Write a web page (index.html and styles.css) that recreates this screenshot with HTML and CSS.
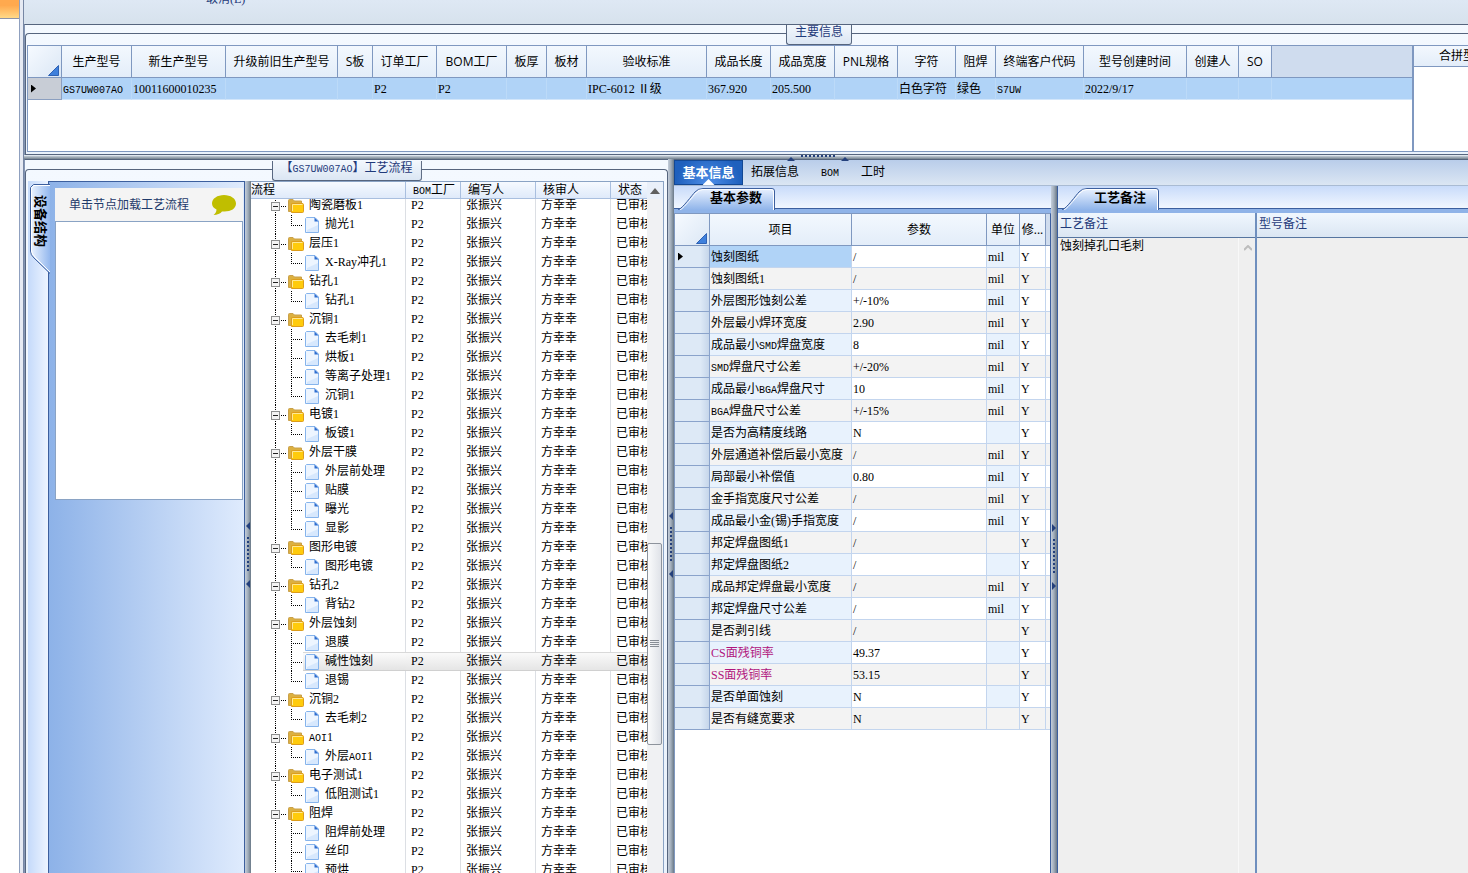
FILE: index.html
```html
<!DOCTYPE html>
<html lang="zh-CN">
<head>
<meta charset="utf-8">
<title>工艺流程</title>
<link rel="stylesheet" href="styles.css">
</head>
<body>
<aside class="rail"><div class="rail-item"></div></aside>
<main class="workspace">
  <header class="toolbar"><button class="cancel" type="button">取消(E)</button></header>

  <section class="main-info">
    <div class="frame">
      <h2 class="caption caption-main">主要信息</h2>
      <div class="grids">
        <div class="order-box">
          <table class="grid order-grid">
            <colgroup id="orderCols"></colgroup>
            <thead><tr id="orderHead"></tr></thead>
            <tbody><tr id="orderRow"></tr></tbody>
          </table>
        </div>
        <div class="merge-box">
          <div class="merge-head">合拼型号</div>
        </div>
      </div>
    </div>
  </section>

  <div class="split-h">
    <svg class="grip-h" width="62" height="6" viewBox="0 0 62 6"><path d="M0 6L4 2L8 6ZM54 6L58 2L62 6Z" fill="#24407c"/><path d="M14 1H50" stroke="#24407c" stroke-width="2" stroke-dasharray="2 2"/></svg>
  </div>

  <div class="lower">
    <section class="process">
      <div class="frame">
        <h2 class="caption caption-process">【<span class="n">GS7UW007AO</span>】工艺流程</h2>
        <div class="process-body">
          <div class="side-tabs">
            <button class="side-tab" type="button">
              <svg width="22" height="92" viewBox="0 0 22 92">
                <defs><linearGradient id="sideFill"><stop offset="0" stop-color="#eef5ff"/><stop offset="1" stop-color="#94b8ee"/></linearGradient></defs>
                <path d="M21 1.500H4.500L1.500 4.500V68Q1.500 72 5 75L21 90.500" fill="url(#sideFill)" stroke="#3c5f9e"/>
                <path d="M21 2.500H5L2.500 5V68Q3 71 6 74L21 89" fill="none" stroke="#fff"/>
              </svg>
              <span>设备结构</span>
            </button>
          </div>
          <div class="structure">
            <div class="hint">
              <span>单击节点加载工艺流程</span>
              <svg width="26" height="22" viewBox="0 0 26 22"><path d="M13 1C19.500 1 25 4.500 25 9.500S20 17.500 13.500 17.500H11C9.500 19.500 6 21 2.500 21C4.500 19.500 5.500 17.500 5.500 15.500C2.500 14 1 12 1 9.500C1 4.500 6.500 1 13 1Z" fill="#c0be00"/></svg>
            </div>
            <div class="structure-view"></div>
          </div>
          <div class="split-v"><svg class="grip-v" width="6" height="66" viewBox="0 0 6 66"><path d="M5 0V8L1 4ZM5 58V66L1 62Z" fill="#24407c"/><path d="M3 15V50" stroke="#24407c" stroke-width="2" stroke-dasharray="2 2"/></svg></div>
          <div class="tree-wrap">
            <div class="tree-scroll" id="treeScroll">
              <table class="tree">
                <colgroup><col class="c-name"><col class="c-plant"><col class="c-user"><col class="c-user"><col class="c-state"></colgroup>
                <thead><tr><th>流程</th><th><span class="n">BOM</span>工厂</th><th>编写人</th><th>核审人</th><th>状态</th></tr></thead>
                <tbody id="treeBody"></tbody>
              </table>
            </div>
            <div class="scrollbar">
              <button class="scroll-up" type="button" aria-label="向上滚动"><svg width="10" height="6" viewBox="0 0 10 6"><path d="M0 6L5 0L10 6Z" fill="#606060"/></svg></button>
              <div class="track"><div class="thumb"><svg width="9" height="8" viewBox="0 0 9 8"><path d="M0 .5H9M0 2.500H9M0 4.500H9M0 6.500H9" stroke="#888e96"/></svg></div></div>
            </div>
          </div>
        </div>
      </div>
    </section>

    <div class="split-v split-main"><svg class="grip-v" width="6" height="66" viewBox="0 0 6 66"><path d="M5 0V8L1 4ZM5 58V66L1 62Z" fill="#24407c"/><path d="M3 15V50" stroke="#24407c" stroke-width="2" stroke-dasharray="2 2"/></svg></div>

    <section class="detail">
      <nav class="tabs">
        <button class="tab active" type="button">基本信息</button>
        <button class="tab" type="button">拓展信息</button>
        <button class="tab" type="button"><span class="n">BOM</span></button>
        <button class="tab" type="button">工时</button>
      </nav>
      <div class="detail-body">
        <div class="params">
          <div class="page-tabs">
            <button class="page-tab" type="button">
              <svg width="100" height="22" viewBox="0 0 100 22">
                <defs><linearGradient id="tabFill" x2="0" y2="1"><stop offset="0" stop-color="#eaf2ff"/><stop offset="1" stop-color="#8fb4ea"/></linearGradient></defs>
                <path d="M3 22C8 20 17 7 20 4Q23 .5 28 .5H97Q99.500 .5 99.500 3V22" fill="url(#tabFill)" stroke="#3c5f9e"/>
                <path d="M5 22C10 19 18 8 21 5Q24 1.500 28 1.500H96Q98.500 1.500 98.500 4V22" fill="none" stroke="#fff"/>
              </svg>
              <span>基本参数</span>
            </button>
          </div>
          <div class="params-box">
            <table class="grid param-grid">
              <colgroup><col class="p-head"><col class="p-item"><col class="p-value"><col class="p-unit"><col class="p-edit"><col></colgroup>
              <thead><tr><th class="corner"></th><th>项目</th><th>参数</th><th>单位</th><th>修...</th><th></th></tr></thead>
              <tbody id="paramBody"></tbody>
            </table>
          </div>
        </div>
        <div class="split-v"><svg class="grip-v" width="6" height="66" viewBox="0 0 6 66"><path d="M1 0V8L5 4ZM1 58V66L5 62Z" fill="#24407c"/><path d="M3 15V50" stroke="#24407c" stroke-width="2" stroke-dasharray="2 2"/></svg></div>
        <div class="remarks">
          <div class="page-tabs">
            <button class="page-tab" type="button">
              <svg width="100" height="22" viewBox="0 0 100 22">
                <path d="M3 22C8 20 17 7 20 4Q23 .5 28 .5H97Q99.500 .5 99.500 3V22" fill="url(#tabFill)" stroke="#3c5f9e"/>
                <path d="M5 22C10 19 18 8 21 5Q24 1.500 28 1.500H96Q98.500 1.500 98.500 4V22" fill="none" stroke="#fff"/>
              </svg>
              <span>工艺备注</span>
            </button>
          </div>
          <div class="remark-cols">
            <div class="remark process-remark">
              <label for="processRemark">工艺备注</label>
              <div class="remark-text">
                <textarea id="processRemark" readonly>蚀刻掉孔口毛刺</textarea>
                <div class="remark-scroll"><svg width="8" height="6" viewBox="0 0 8 6"><path d="M0 5L4 1L8 5" fill="none" stroke="#bdbdbd" stroke-width="2"/></svg></div>
              </div>
            </div>
            <div class="remark model-remark">
              <label for="modelRemark">型号备注</label>
              <div class="remark-text"><textarea id="modelRemark" readonly></textarea></div>
            </div>
          </div>
        </div>
      </div>
    </section>
  </div>
</main>
<script src="app.js"></script>
</body>
</html>
```
FILE: styles.css
```css
* { box-sizing: border-box; }

body {
  margin: 0;
  height: 100vh;
  display: flex;
  overflow: hidden;
  background: #fff;
  color: #000;
  font: 12px/18px "Liberation Serif", "Noto Sans CJK SC", serif;
}

button {
  margin: 0;
  padding: 0;
  border: 0;
  background: none;
  color: inherit;
  font: inherit;
}

svg { display: block; }

/* Narrow capitals */
.n { font-family: "Liberation Mono", monospace; font-size: 10px; line-height: 0; }

/* Left rail */
.rail {
  flex: none;
  width: 24px;
  background: #fff;
  border-right: 1px solid #7787a4;
  box-shadow: inset -3px 0 #e6eaf3, inset -4px 0 #8fa0bf;
}
.rail-item {
  width: 19px;
  height: 19px;
  border-bottom: 1px solid #8b93a8;
  background: linear-gradient(#ffa94e 30%, #ffd987);
}

.workspace {
  flex: 1;
  min-width: 0;
  display: flex;
  flex-direction: column;
}

.toolbar {
  flex: none;
  height: 24px;
  padding-left: 182px;
  overflow: hidden;
  background: linear-gradient(#dee8f4, #d7e2ed);
  color: #1f3a7a;
}
.cancel { display: block; margin-top: -10px; line-height: 18px; }

/* Framed panels */
.main-info, .process {
  background: linear-gradient(#f4f9ff, #eaf2fc);
  border-top: 1px solid #56657e;
  border-left: 1px solid #8496b5;
}
.main-info { flex: none; padding-top: 8px; }
.frame {
  position: relative;
  border: 1px solid #56657e;
  border-radius: 4px 4px 0 0;
  padding: 11px 0 2px 1px;
}
.main-info .frame { border-right: 0; border-top-right-radius: 0; }
.caption {
  position: absolute;
  top: -9px;
  left: 50%;
  transform: translateX(-50%);
  margin: 0;
  height: 20px;
  padding: 0 8px;
  border: 1px solid #56657e;
  border-top: 0;
  border-radius: 0 0 3px 3px;
  background: linear-gradient(#f2f7fd, #dbe6f3);
  color: #1f3a7a;
  font-size: 12px;
  font-weight: normal;
  line-height: 14px;
  white-space: nowrap;
}
.caption-main { left: 55%; }

.grids { display: flex; height: 107px; }
.order-box {
  flex: 1;
  min-width: 0;
  overflow: hidden;
  border: 1px solid #7f98c0;
  border-right: 0;
  background: #fff;
}
.merge-box {
  flex: none;
  width: 56px;
  overflow: hidden;
  border: 1px solid #7f98c0;
  border-left-width: 2px;
  border-right: 0;
  background: #fff;
}
.merge-head {
  height: 21px;
  padding-left: 25px;
  border-bottom: 1px solid #7f98c0;
  background: linear-gradient(#f3f8fe, #e3edf9);
  font-family: "Open Sans", "Noto Sans CJK SC", sans-serif;
  white-space: nowrap;
  line-height: 20px;
}

/* Data grids */
.grid {
  width: 100%;
  table-layout: fixed;
  border-collapse: separate;
  border-spacing: 0;
}
.grid th, .grid td {
  padding: 0 1px;
  overflow: hidden;
  white-space: nowrap;
  text-align: left;
}
.grid th {
  height: 32px;
  border-right: 1px solid #7f98c0;
  border-bottom: 1px solid #7f98c0;
  background: linear-gradient(#f3f8fe, #e3edf9);
  font-family: "Open Sans", "Noto Sans CJK SC", sans-serif;
  font-weight: normal;
  text-align: center;
}
.grid th:last-child { border-right: 0; background: #cfdcee; }
.grid th.corner {
  background: linear-gradient(135deg, #f6faff, #dbe7f5);
}
.corner svg { margin: 17px 1px 0 auto; }
.marker::before {
  content: "";
  display: block;
  width: 5px;
  height: 8px;
  margin-left: 2px;
  background: #000;
  clip-path: polygon(0 0, 100% 50%, 0 100%);
}
.order-grid td {
  height: 22px;
  background: #b0d3f7;
  border-right: 1px solid #bcdaf8;
  border-bottom: 1px solid #d3e6fa;
}
.order-grid td:first-child { background: #c8cdd6; border-color: #8b9fc0; }
.order-grid td:last-child { border-right: 0; }

.param-grid td {
  height: 22px;
  background: #fff;
  border-right: 1px solid #c3d5ee;
  border-bottom: 1px solid #c3d5ee;
}
.param-grid td:nth-child(2), .param-grid td:nth-child(4) { background: #e8f2fd; }
.param-grid tr:nth-child(even) td { background: #f3f3f3; }
.param-grid tbody tr td:first-child {
  background: linear-gradient(90deg, #dde9f6 75%, #c6d6ea);
  border-color: #8aa3cb;
}
.param-grid tr:first-child td:nth-child(2) { background: #b0d3f7; }
.param-grid td.pink { color: #b0147c; }
.param-grid td:last-child { border-right: 0; }

/* Splitters */
.split-h {
  flex: none;
  position: relative;
  height: 4px;
  border-top: 1px solid #dfe6ee;
  background: linear-gradient(#c2ccd6, #75828f);
}
.grip-h { position: absolute; left: 55%; top: -1px; transform: translateX(-50%); }
.split-v {
  flex: none;
  position: relative;
  width: 6px;
  background: linear-gradient(90deg, #c4cedb, #a0acb9 50%, #6a7988);
}
.grip-v { position: absolute; left: 0; top: 54%; transform: translateY(-50%); }

.lower { flex: 1; min-height: 0; display: flex; }

/* Process panel */
.process { flex: none; width: 644px; display: flex; padding-top: 9px; }
.process .frame { flex: 1; min-width: 0; display: flex; border-bottom: 0; padding: 11px 3px 0 2px; }
.process-body { flex: 1; min-width: 0; display: flex; }
.side-tabs {
  flex: none;
  width: 21px;
  background: linear-gradient(90deg, #c5dafa, #edf4ff);
  border-right: 1px solid #3c5f9e;
}
.side-tab { position: relative; display: block; margin: 2px 0 0 1px; width: 22px; height: 92px; }
.side-tab svg { position: absolute; inset: 0; }
.side-tab span {
  position: absolute;
  left: 2px;
  top: 12px;
  writing-mode: vertical-rl;
  text-orientation: sideways;
  font-size: 13px;
  font-weight: bold;
  line-height: 18px;
}
.structure {
  flex: 1;
  min-width: 0;
  padding: 6px 1px 0 6px;
  border-top: 1px solid #3c5f9e;
  border-right: 1px solid #3c5f9e;
  background: linear-gradient(90deg, #8db2e8, #dfebfd);
}
.hint {
  height: 33px;
  padding: 0 6px 0 14px;
  display: flex;
  align-items: center;
  justify-content: space-between;
  background: #f4f4f4;
  color: #1f3a6a;
}
.structure-view { height: 279px; border: 1px solid #8aa3c4; background: #fff; }

.tree-wrap { flex: none; width: 413px; display: flex; border-top: 1px solid #8aa3c4; border-right: 1px solid #8aa3c4; background: #fff; }
.tree-scroll { flex: 1; min-width: 0; overflow: hidden; }
.tree { width: 397px; table-layout: fixed; border-collapse: separate; border-spacing: 0; }
.c-name { width: 155px; }
.c-plant { width: 55px; }
.c-user { width: 75px; }
.c-state { width: 37px; }
.tree th {
  position: sticky;
  top: 0;
  z-index: 1;
  height: 17px;
  padding: 0 0 0 7px;
  border-right: 1px solid #a9bfdf;
  border-bottom: 1px solid #a9bfdf;
  background: linear-gradient(#f6faff, #dfeafa);
  font-weight: normal;
  line-height: 16px;
  text-align: left;
  white-space: nowrap;
}
.tree th:first-child { padding-left: 0; }
.tree td {
  height: 19px;
  padding: 0 0 0 5px;
  overflow: hidden;
  border-right: 1px solid #dcdfe4;
  line-height: 19px;
  white-space: nowrap;
}
.tree td:first-child { padding: 0; }
.tree th:last-child, .tree td:last-child { border-right: 0; }
.node { display: flex; height: 19px; }
.node svg { flex: none; }
.node button { height: 19px; line-height: 19px; padding-left: 5px; }
.tree .selected td { background: linear-gradient(#fbfbfb, #e4e4e4); border-right: 0; box-shadow: inset 0 1px #d9d9d9, inset 0 -1px #d0d0d0; }
.tree .selected td:first-child { background: linear-gradient(90deg, #fff 52px, transparent 52px), linear-gradient(#d9d9d9 1px, #fbfbfb 1px, #e4e4e4 18px, #d0d0d0 18px); box-shadow: none; }

.scrollbar { flex: none; width: 16px; display: flex; flex-direction: column; background: #f0f1f3; }
.scroll-up { height: 17px; display: grid; place-items: center; background: #e9f0fa; }
.track { flex: 1; position: relative; }
.thumb {
  position: absolute;
  left: 0;
  right: 1px;
  top: 51%;
  height: 30%;
  display: grid;
  place-items: center;
  border: 1px solid #8d939c;
  border-radius: 2px;
  background: linear-gradient(90deg, #fafbfc, #dfe2e8);
}

/* Detail area */
.detail { flex: 1; min-width: 0; display: flex; flex-direction: column; border-top: 1px solid #56657e; }
.tabs {
  flex: none;
  height: 26px;
  display: flex;
  border-bottom: 1px solid #a9bbd3;
  background: linear-gradient(#b9cdea, #dbe6f3);
}
.tab { height: 25px; padding: 0 8px; line-height: 23px; }
.tab:nth-child(3) { padding: 0 14px; }
.tab.active {
  position: relative;
  width: 69px;
  padding: 0 5px;
  border: 1px solid #134894;
  background: radial-gradient(circle at 50% 100%, #4d8ee8, #1f60bd 80%);
  color: #fff;
  font-size: 13px;
  font-weight: bold;
  line-height: 20px;
}
.tab.active::after {
  content: "";
  position: absolute;
  left: 50%;
  bottom: -1px;
  width: 12px;
  height: 6px;
  margin-left: -6px;
  background: #fff;
  clip-path: polygon(50% 0, 100% 100%, 0 100%);
}
.detail-body { flex: 1; min-height: 0; display: flex; }
.params { flex: none; width: 377px; display: flex; flex-direction: column; }
.page-tabs {
  flex: none;
  height: 27px;
  padding-top: 2px;
  border-bottom: 4px solid #8fb3e8;
  background: linear-gradient(#c8dbfa, #f3f8ff);
  box-shadow: inset 0 -1px #3c5f9e;
}
.page-tab { position: relative; display: block; width: 100px; height: 21px; margin-left: 1px; font-size: 13px; font-weight: bold; }
.page-tab svg { position: absolute; left: 0; top: 0; }
.page-tab span { position: absolute; left: 35px; top: 0; line-height: 20px; white-space: nowrap; }
.params-box {
  flex: 1;
  border: 1px solid #7f98c0;
  border-right-color: #3c5f9e;
  border-bottom: 0;
  background: #fff;
}
.p-head { width: 35px; }
.p-item { width: 142px; }
.p-value { width: 135px; }
.p-unit { width: 33px; }
.p-edit { width: 26px; }

.remarks { flex: 1; min-width: 0; display: flex; flex-direction: column; border-left: 1px solid #3c5f9e; }
.remark-cols { flex: 1; display: flex; }
.remark { display: flex; flex-direction: column; background: #efefef; }
.process-remark { flex: none; width: 199px; border-right: 2px solid #6f8fbe; }
.model-remark { flex: 1; min-width: 0; }
.remark label {
  height: 25px;
  padding-left: 2px;
  border-bottom: 1px solid #56759f;
  background: linear-gradient(#f0f7fe, #dbe6f2);
  color: #1f3a7a;
  line-height: 23px;
}
.remark-text { flex: 1; display: flex; }
.remark textarea {
  flex: 1;
  min-width: 0;
  margin: 0;
  padding: 0 0 0 2px;
  border: 0;
  outline: 0;
  resize: none;
  background: #efefef;
  color: #000;
  font: inherit;
  line-height: 16px;
}
.remark-scroll { width: 17px; padding: 7px 0 0 5px; border-left: 1px solid #f8f8f8; }
```
FILE: app.js
```js
const orderColumns = [
  ['', 34, ''], ['生产型号', 70, '<span class="n">GS7UW007AO</span>'], ['新生产型号', 94, '10011600010235'],
  ['升级前旧生产型号', 112, ''], ['S板', 35, ''], ['订单工厂', 64, 'P2'], ['BOM工厂', 70, 'P2'],
  ['板厚', 40, ''], ['板材', 40, ''], ['验收标准', 120, 'IPC-6012 Ⅱ级'], ['成品长度', 64, '367.920'],
  ['成品宽度', 64, '205.500'], ['PNL规格', 63, ''], ['字符', 58, '白色字符'], ['阻焊', 40, '绿色'],
  ['终端客户代码', 88, '<span class="n">S7UW</span>'], ['型号创建时间', 103, '2022/9/17'], ['创建人', 52, ''], ['SO', 33, ''], ['', 0, '']
];
const byId = id => document.getElementById(id);
const cornerIcon = '<svg width="11" height="11" viewBox="0 0 11 11"><path d="M.5 10.500H10.500V.5Z" fill="#3f80dc" stroke="#2f62b4"/></svg>';
byId('orderCols').innerHTML = orderColumns.map(c => c[1] ? `<col style="width:${c[1]}px">` : '<col>').join('');
byId('orderHead').innerHTML = orderColumns.map((c, i) => i ? `<th>${c[0]}</th>` : '<th class="corner"></th>').join('');
byId('orderRow').innerHTML = orderColumns.map((c, i) => `<td${i ? '' : ' class="marker"'}>${c[2]}</td>`).join('');
document.querySelectorAll('.corner').forEach(th => { th.innerHTML = cornerIcon; });

const processes = [
  ['陶瓷磨板1', '抛光1'], ['层压1', 'X-Ray冲孔1'], ['钻孔1', '钻孔1'],
  ['沉铜1', '去毛刺1', '烘板1', '等离子处理1', '沉铜1'], ['电镀1', '板镀1'],
  ['外层干膜', '外层前处理', '贴膜', '曝光', '显影'], ['图形电镀', '图形电镀'], ['钻孔2', '背钻2'],
  ['外层蚀刻', '退膜', '碱性蚀刻', '退锡'], ['沉铜2', '去毛刺2'],
  ['<span class="n">AOI</span>1', '外层<span class="n">AOI</span>1'], ['电子测试1', '低阻测试1'],
  ['阻焊', '阻焊前处理', '丝印', '预烘']
];
const dots = 'stroke="#000" stroke-dasharray="1 1" fill="none"';
const folderIcon = `<svg width="53" height="19" viewBox="0 0 53 19">
  <path d="M24.500 0V19M30 10.500H35" ${dots}/>
  <rect x="20.500" y="6.500" width="8" height="8" fill="#f4f4f4" stroke="#8e8f8f"/><path d="M22 10.500H27" stroke="#222"/>
  <path d="M37.500 15.500V4.500Q37.500 3.500 38.500 3.500H42L43.500 5H50.500V8H40.500V15.500Z" fill="#dcb040" stroke="#c9a04a"/>
  <path d="M40.500 16.500V8.500Q40.500 7.500 41.500 7.500H51Q52.500 7.500 52.500 8.500V15.500Q52.500 16.500 51.500 16.500Z" fill="#ffcb0c" stroke="#dd9d1c"/>
  <path d="M41.500 15V8.500H51.500" stroke="#ffe995" fill="none"/></svg>`;
const fileIcon = last => `<svg width="69" height="19" viewBox="0 0 69 19">
  <path d="M24.500 0V19M40.500 0V${last ? 11 : 19}M42 10.500H51" ${dots}/>
  <path d="M55.500 2.500H64L67.500 6V17.500H54.500V3.500Z" fill="#edf5ff" stroke="#86b4ec"/>
  <path d="M56 15L67 10V17H56Z" fill="#d7e8fd"/>
  <path d="M63.500 2.500L67.500 6.500H63.500Z" fill="#2f6fd0"/></svg>`;
const treeRow = (icon, label) => `<tr${label === '碱性蚀刻' ? ' class="selected"' : ''}><td><div class="node">${icon}<button type="button">${label}</button></div></td><td>P2</td><td>张振兴</td><td>方幸幸</td><td>已审核</td></tr>`;
byId('treeBody').innerHTML = processes.map(([group, ...steps]) =>
  treeRow(folderIcon, group) + steps.map((s, i) => treeRow(fileIcon(i === steps.length - 1), s)).join('')).join('');
byId('treeScroll').scrollTop = 3;

const smd = '<span class="n">SMD</span>';
const bga = '<span class="n">BGA</span>';
const params = [
  ['蚀刻图纸', '/', 'mil'], ['蚀刻图纸1', '/', 'mil'], ['外层图形蚀刻公差', '+/-10%', 'mil'],
  ['外层最小焊环宽度', '2.90', 'mil'], [`成品最小${smd}焊盘宽度`, '8', 'mil'], [`${smd}焊盘尺寸公差`, '+/-20%', 'mil'],
  [`成品最小${bga}焊盘尺寸`, '10', 'mil'], [`${bga}焊盘尺寸公差`, '+/-15%', 'mil'], ['是否为高精度线路', 'N', ''],
  ['外层通道补偿后最小宽度', '/', 'mil'], ['局部最小补偿值', '0.80', 'mil'], ['金手指宽度尺寸公差', '/', 'mil'],
  ['成品最小金(锡)手指宽度', '/', 'mil'], ['邦定焊盘图纸1', '/', ''], ['邦定焊盘图纸2', '/', ''],
  ['成品邦定焊盘最小宽度', '/', 'mil'], ['邦定焊盘尺寸公差', '/', 'mil'], ['是否剥引线', '/', ''],
  ['CS面残铜率', '49.37', ''], ['SS面残铜率', '53.15', ''], ['是否单面蚀刻', 'N', ''], ['是否有缝宽要求', 'N', '']
];
byId('paramBody').innerHTML = params.map(([item, value, unit], i) =>
  `<tr><td${i ? '' : ' class="marker"'}></td><td${/^[CS]S面/.test(item) ? ' class="pink"' : ''}>${item}</td><td>${value}</td><td>${unit}</td><td>Y</td><td></td></tr>`).join('');
```
